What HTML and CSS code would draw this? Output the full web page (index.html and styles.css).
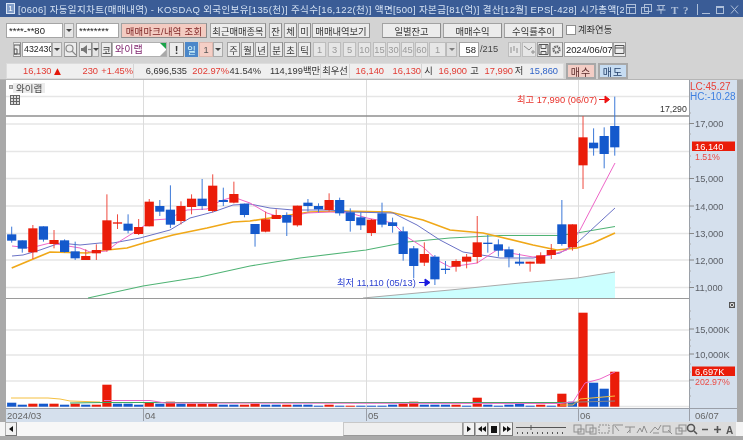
FILE: index.html
```html
<!DOCTYPE html>
<html lang="ko">
<head>
<meta charset="utf-8">
<title>자동일지차트</title>
<link rel="stylesheet" href="styles.css">
</head>
<body>
<div class="window">
  <header class="titlebar">
    <span class="title-num">1</span>
    <span class="title-text">[0606] 자동일지차트(매매내역) - KOSDAQ 외국인보유[135(천)] 주식수[16,122(천)] 액면[500] 자본금[81(억)] 결산[12월] EPS[-428] 시가총액[2,615(억)]</span>
    <svg class="title-tools" viewBox="0 0 117 14" width="117" height="14">
      <g class="tool-line">
        <rect x="2.5" y="2.5" width="9" height="9"/><path d="M2.5 5.5h9M5.5 5.5v6"/>
        <rect x="20.5" y="2.5" width="7" height="7"/><rect x="17.5" y="5.5" width="7" height="6"/>
        <path d="M33 3.5h8M35 3.5v4h4v-4M32.5 8h9M37 8v4"/>
        <path d="M73.500 2v11"/>
        <path d="M78 11.500h8"/>
        <rect x="92.500" y="4.500" width="7" height="7"/><path d="M92.500 5.500h7"/>
        <path d="M107 3.500l7 8M114 3.500l-7 8"/>
      </g>
      <text x="47" y="12" class="tool-t">T</text>
      <text x="59" y="12" class="tool-t">?</text>
    </svg>
  </header>

  <section class="toolbar">
    <div class="row row-one">
      <span class="field w57">****-**80</span>
      <span class="drop w10 ml1"><i class="tri"></i></span>
      <span class="field w43 ml2">********</span>
      <button class="btn pink w86 ml2 wide">매매마크/내역 조회</button>
      <button class="btn w56 ml3">최근매매종목</button>
      <button class="btn w13 ml3">잔</button>
      <button class="btn w13 ml2">체</button>
      <button class="btn w13 ml1">미</button>
      <button class="btn w58 ml1">매매내역보기</button>
      <button class="btn w59 ml12">일별잔고</button>
      <button class="btn w59 ml2">매매수익</button>
      <button class="btn w59 ml2">수익률추이</button>
      <span class="check ml3"></span>
      <span class="check-label ml2">계좌연동</span>
    </div>
    <div class="row row-two">
      <span class="btn w8 ml7 icon-cell"><svg viewBox="0 0 8 13" width="8" height="13"><path class="ink" d="M1 2h6v9H1zM1 6h3v5H1z"/></svg></span>
      <span class="field w30 ml1 code">432430</span>
      <span class="drop w10"><i class="tri"></i></span>
      <span class="btn w13 ml2 icon-cell"><svg viewBox="0 0 13 13" width="13" height="13"><circle class="ink-l" cx="5.500" cy="5.500" r="3.500"/><path class="ink-l" d="M8 8l4 4"/></svg></span>
      <span class="btn w13 ml2 icon-cell"><svg viewBox="0 0 13 13" width="13" height="13"><path class="fill-d" d="M2 5h2l4-3v9L4 8H2z"/><path class="ink-l" d="M9 6.500h3"/></svg></span>
      <span class="drop w7"><i class="tri"></i></span>
      <span class="btn w11 ml2">코</span>
      <span class="name w55">와이랩<i class="flag-g"></i><i class="flag-y"></i></span>
      <button class="btn w15 ml2 bang">!</button>
      <button class="btn w13 ml1 day">일</button>
      <button class="btn w14 ml1 onep">1</button>
      <span class="drop w10"><i class="tri"></i></span>
      <button class="btn w13 ml4">주</button>
      <button class="btn w13 ml1">월</button>
      <button class="btn w13 ml1">년</button>
      <button class="btn w13 ml2">분</button>
      <button class="btn w13 ml1">초</button>
      <button class="btn w13 ml1">틱</button>
      <button class="btn w13 ml2 off">1</button>
      <button class="btn w13 ml2 off">3</button>
      <button class="btn w13 ml2 off">5</button>
      <button class="btn w13 ml2 off">10</button>
      <button class="btn w13 ml2 off">15</button>
      <button class="btn w13 ml1 off">30</button>
      <button class="btn w13 ml1 off">45</button>
      <button class="btn w13 ml1 off">60</button>
      <span class="btn w17 ml1 off">1</span>
      <span class="drop w11 dim"><i class="tri"></i></span>
      <span class="field w20 ml2 right">58</span>
      <span class="count w20 ml1">/215</span>
      <span class="btn w13 ml8 off icon-cell"><svg viewBox="0 0 13 13" width="13" height="13"><path class="ink-f" d="M3 4v6M6 3v5M9 5v5"/></svg></span>
      <span class="btn w14 ml1 off icon-cell"><svg viewBox="0 0 14 13" width="14" height="13"><path class="ink-m" d="M2 3l5 4 3-3M9 9h4M11 7v4"/></svg></span>
      <span class="btn w13 ml1 icon-cell"><svg viewBox="0 0 13 13" width="13" height="13"><path class="ink" d="M2 1.500h9v10H2zM4 1.500v4h5v-4M4 11.500v-3h5v3"/></svg></span>
      <span class="btn w13 icon-cell"><svg viewBox="0 0 13 13" width="13" height="13"><circle class="gear" cx="6.500" cy="6.500" r="3"/></svg></span>
      <span class="field w49 ml1 tight">2024/06/07</span>
      <span class="btn w13 icon-cell"><svg viewBox="0 0 13 13" width="13" height="13"><path class="ink" d="M2 2.500h9v8H2zM2 5h9"/></svg></span>
    </div>
    <div class="row row-three">
      <div class="strip">
        <span class="cell w54 up">16,130 <span class="tri-up">▲</span></span>
        <span class="cell w37 up">230</span>
        <span class="cell w36 up sep">+1.45%</span>
        <span class="cell w53">6,696,535</span>
        <span class="cell w42 up">202.97%</span>
        <span class="cell w32">41.54%</span>
        <span class="cell w60 sep">114,199백만</span>
        <span class="cell w29 ctr sep">최우선</span>
        <span class="cell w34 up">16,140</span>
        <span class="cell w38 up sep">16,130</span>
        <span class="cell w13 ctr">시</span>
        <span class="cell w32 up">16,900</span>
        <span class="cell w15 ctr">고</span>
        <span class="cell w31 up">17,990</span>
        <span class="cell w12 ctr">저</span>
        <span class="cell w33 down">15,860</span>
      </div>
      <button class="btn order buy ml2">매수</button>
      <button class="btn order sell ml2">매도</button>
    </div>
  </section>

  <main class="chart-wrap">
    <svg class="chart" viewBox="6 80 731 342" width="731" height="342">
      <rect class="plot" x="6" y="80" width="683" height="328"/>
      <g class="grid">
        <path d="M6 96.500H689M6 124H689M6 151.500H689M6 178.500H689M6 206H689M6 233.500H689M6 260H689M6 287.500H689"/>
        <path d="M6 330H689M6 355H689M6 381H689M6 406.500H689"/>
      </g>
      <path class="vgrid" d="M143.500 80V408M366.500 80V408M578.500 80V408"/>
      <path class="level" d="M6 116H689"/>
      <path class="split" d="M6 298.500H689"/>

      <polygon class="cloud" points="363,298 450,290 520,283 577,278 615,272 615,298"/>
      <polyline class="cloud-top" points="363,298 450,290 520,283 577,278 615,272"/>
      <polyline class="ma120" points="88,298 143,286 200,277 250,266 300,258 366,250 407,242 450,238 500,235.500 560,235.500 577,233 615,226.500"/>
      <polyline class="ma60" points="11.700,268 50,252 87,253 107,250 127,248 147,242 173,235 207,228 233,222 250,221 270,218 310,212 343,211 390,212 423,220 450,230 483,233 500,237 533,245 557,250 577,248 593,243 615,233"/>
      <polyline class="ma20" points="12,256 23,255 40,250 60,243 80,245 100,243 113,243 140,238 170,230 190,218 213,212 233,205 250,204 270,208 293,210 330,210 350,212 393,213 417,225 440,240 463,252 500,258 533,258 560,253 577,243 615,208"/>
      <polyline class="ma5" points="12,246 30,248 50,243 80,248 90,252 107,251 117,243 133,233 153,220 167,219 187,210 207,209 220,201 233,197 250,203 267,213 283,218 307,213 330,212 350,213 367,218 393,223 407,237 423,247 437,260 450,267 477,263 500,248 510,253 533,257 550,255 567,250 580,230 615,163"/>

      <g id="candles"></g>
      <g id="volumes"></g>

      <polyline class="v-orange" points="11,398 48,398 60,399 70,401 100,402"/>
      <polyline class="v-green" points="70,403 104,402.500 560,402.500 573,403"/>
      <polyline class="v-pink" points="104,400.500 150,400.500 165,403 560,403.500 573,402 585,383 600,379 615,372"/>
      <polyline class="v-orange" points="560,405 573,405 580,399 615,396"/>
      <polyline class="v-gray" points="573,403 580,402 615,401"/>

      <rect class="label-bg" x="13" y="83" width="32" height="10"/>
      <rect class="label-dot" x="9.500" y="85.500" width="3" height="3"/>
      <text class="t-name" x="16" y="91.500">와이랩</text>
      <g class="grid-icon">
        <rect x="10.500" y="95.500" width="9" height="9"/>
        <path d="M10.500 98.500h9M10.500 101.500h9M13.500 95.500v9M16.500 95.500v9"/>
      </g>

      <text class="t-hi" x="517" y="103">최고 17,990 (06/07)</text>
      <path class="arrow-r" d="M599 99.500h9M605 96l4.500 3.500-4.500 3.500z"/>
      <text class="t-lo" x="337" y="286">최저 11,110 (05/13)</text>
      <path class="arrow-b" d="M419 282.500h7M425 279l5 3.500-5 3.500z"/>
      <text class="t-level" x="660" y="112">17,290</text>

      <rect class="axis" x="689" y="80" width="48" height="328"/>
      <path class="axis-edge" d="M689.500 80V421"/>
      <path class="ticks" d="M689 123.500h5M689 178.500h5M689 206h5M689 233.500h5M689 260h5M689 287.500h5M689 329h5M689 354h5M689 380h5"/>
      <path class="minor" d="M689 113h2M689 134h2M689 156h2M689 167h2M689 189h2M689 200h2M689 217h2M689 228h2M689 244h2M689 255h2M689 271h2M689 282h2M689 311h2M689 319h2M689 340h2M689 346h2M689 364h2M689 372h2M689 388h2M689 396h2"/>
      <text class="t-lc" x="690" y="90">LC:45.27</text>
      <text class="t-hc" x="690" y="100">HC:-10.28</text>
      <text class="t-ax" x="695" y="127">17,000</text>
      <text class="t-ax" x="695" y="182">15,000</text>
      <text class="t-ax" x="695" y="209.500">14,000</text>
      <text class="t-ax" x="695" y="236.500">13,000</text>
      <text class="t-ax" x="695" y="263.500">12,000</text>
      <text class="t-ax" x="695" y="290.500">11,000</text>
      <rect class="tag" x="692" y="141.500" width="43" height="9.500"/>
      <text class="t-tag" x="695" y="150">16,140</text>
      <text class="t-pct" x="695" y="159.500">1.51%</text>
      <g class="close-mini"><rect x="729.500" y="302.500" width="5" height="5"/><path d="M730.500 303.500l3 3M733.500 303.500l-3 3"/></g>
      <text class="t-ax" x="695" y="333">15,000K</text>
      <text class="t-ax" x="695" y="358">10,000K</text>
      <rect class="tag" x="692" y="366.500" width="43" height="9.500"/>
      <text class="t-tag" x="695" y="375">6,697K</text>
      <text class="t-pct" x="695" y="384.500">202.97%</text>

      <rect class="date-band" x="6" y="408" width="731" height="14"/>
      <path class="date-line" d="M6 408.500H737M143.500 408V421M366.500 408V421M578.500 408V421M689.500 408V421"/>
      <text class="t-date" x="7" y="418.500">2024/03</text>
      <text class="t-date" x="145" y="418.500">04</text>
      <text class="t-date" x="368" y="418.500">05</text>
      <text class="t-date" x="580" y="418.500">06</text>
      <text class="t-date" x="695" y="418.500">06/07</text>
    </svg>
  </main>

  <footer class="bottom">
    <span class="bbtn w12"><i class="ar-l"></i></span>
    <span class="track"></span>
    <span class="thumb"></span>
    <span class="bbtn w12"><i class="ar-r"></i></span>
    <span class="bbtn w13"><i class="ar-l"></i><i class="ar-l"></i></span>
    <span class="bbtn w12"><i class="stop"></i></span>
    <span class="bbtn w13"><i class="ar-r"></i><i class="ar-r"></i></span>
    <svg class="bottom-tools" viewBox="514 422 223 14" width="223" height="14">
      <path class="ink" d="M517 427.500h50M532 425v5"/>
      <path class="dots" d="M518 433h49"/>
      <g class="ink-m">
        <rect x="575" y="425" width="7" height="7"/><rect x="579" y="429" width="6" height="5"/>
        <rect x="587" y="425" width="7" height="7"/><rect x="591" y="428" width="6" height="6"/>
        <rect x="600" y="425" width="10" height="8" stroke-dasharray="2 1"/>
        <path d="M614 425v9M614 425h10M616 426l4 5"/>
        <path d="M626 427h10M631 427v6M628 433l3-3"/>
        <path d="M638 433l3-5 2 4 2-6 3 7"/>
        <path d="M651 433l5-6 3 3 3-5M654 433h6"/>
        <rect x="664" y="426" width="7" height="6"/><path d="M669 430l4 4"/>
        <rect x="677" y="428" width="6" height="6"/><rect x="680" y="425" width="7" height="6"/>
      </g>
      <circle class="ink-d" cx="692" cy="428" r="3.500"/>
      <path class="ink-d" d="M695 431l3 3M703 429.500h6M715 429.500h7M718.500 426v7"/>
      <text class="tool-a" x="727" y="434">A</text>
    </svg>
  </footer>
</div>
<script src="chart.js"></script>
</body>
</html>
```

FILE: styles.css
```css
* { box-sizing: border-box; }
html, body { margin: 0; padding: 0; }
body {
  width: 743px; height: 440px; overflow: hidden;
  background: #a9a9a9;
  font: 9.3px "Liberation Sans", "Noto Sans CJK KR", sans-serif;
  color: #333;
}
.window { display: flex; flex-direction: column; width: 743px; height: 440px; filter: blur(.3px); }

/* title bar */
.titlebar {
  display: flex; align-items: center; height: 17px; flex: none;
  background: #3a5c96; color: #d5e2f3; padding-left: 6px;
}
.title-num {
  width: 9px; height: 11px; flex: none; border: 1px solid #dbe6f5; background: #7f9cc8;
  color: #fff; font-size: 8px; line-height: 9px; text-align: center;
}
.title-text {
  width: 606px; margin-left: 3px; flex: none; overflow: hidden; white-space: nowrap;
  font-size: 9.5px; letter-spacing: .37px;
}
.title-tools { flex: none; margin-left: 0; }
.tool-line * { fill: none; stroke: #aebfd9; stroke-width: 1; }
.tool-t { font: bold 11px "Liberation Serif", serif; fill: #aebfd9; }

/* toolbar */
.toolbar { flex: none; height: 63px; background: #d3d3d3; border-bottom: 1px solid #b5b5b5; padding-top: 6px; }
.row { display: flex; align-items: stretch; height: 15px; padding-left: 6px; white-space: nowrap; }
.row-two { margin-top: 4px; }
.row-three { margin-top: 6px; height: 16px; }

.field {
  display: block; background: #fff; border: 1px solid #a5a5a5; padding: 0 2px;
  line-height: 13px; color: #222; font-size: 9.5px; overflow: hidden;
}
.tight { padding: 0 1px; letter-spacing: -0.1px; }
.code { padding: 0 0 0 1px; font-size: 8.8px; }
.right { text-align: right; }
.wide { letter-spacing: .3px; }
.drop {
  display: flex; align-items: center; justify-content: center;
  background: #e6e6e6; border: 1px solid #ababab;
}
.dim { opacity: .6; }
.tri { width: 0; height: 0; border: 3px solid transparent; border-top: 3px solid #444; border-bottom: 0; }
.btn {
  display: flex; align-items: center; justify-content: center; margin-top: 0;
  padding: 0; font: inherit; background: #ececec; color: #333;
  border: 1px solid #a2a2a2; border-bottom-color: #8c8c8c; border-right-color: #8c8c8c;
  overflow: hidden;
}
.pink { background: #f3cbc1; color: #7a1f1f; }
.off { color: #999; background: #e6e6e6; border-color: #bdbdbd; }
.bang { font-weight: bold; font-size: 11px; }
.day { background: #4b87c9; color: #dff; border-color: #4b87c9; }
.onep { background: #f5cfc6; color: #555; border-color: #dcb7ae; }
.icon-cell { padding: 0; }
.icon-cell svg { display: block; flex: none; }
.check { width: 10px; background: #fff; border: 1px solid #8f8f8f; margin-top: 2px; height: 10px; }
.check-label { line-height: 15px; color: #333; }
.name {
  position: relative; display: block; background: #fff; border: 1px solid #b0b0b0;
  color: #7c1f6a; padding-left: 2px; line-height: 13px; font-size: 10px;
}
.flag-g { position: absolute; right: 0; top: 0; border: 3px solid #1aa34a; border-left-color: transparent; border-bottom-color: transparent; }
.flag-y { position: absolute; right: 0; bottom: 0; border: 3px solid #a9a9a9; border-left-color: transparent; border-top-color: transparent; }
.count { line-height: 15px; color: #444; }
.ink { fill: none; stroke: #555; stroke-width: 1; }
.ink-l { fill: none; stroke: #8a8a8a; stroke-width: 1.2; }
.ink-f { fill: none; stroke: #bbb; stroke-width: 2; }
.ink-m { fill: none; stroke: #8f8f8f; stroke-width: 1; }
.ink-d { fill: none; stroke: #555; stroke-width: 1.6; }
.fill-d { fill: #777; }
.gear { fill: none; stroke: #666; stroke-width: 2.4; stroke-dasharray: 1.5 .8; }

.w7 { width: 7px; } .w8 { width: 8px; } .w10 { width: 10px; } .w11 { width: 11px; }
.w12 { width: 12px; } .w13 { width: 13px; } .w14 { width: 14px; } .w15 { width: 15px; }
.w17 { width: 17px; } .w20 { width: 20px; } .w29 { width: 29px; } .w30 { width: 30px; }
.w31 { width: 31px; } .w32 { width: 32px; } .w33 { width: 33px; } .w34 { width: 34px; }
.w36 { width: 36px; } .w37 { width: 37px; } .w38 { width: 38px; } .w42 { width: 42px; }
.w43 { width: 43px; } .w49 { width: 49px; } .w53 { width: 53px; } .w54 { width: 54px; }
.w55 { width: 55px; } .w56 { width: 56px; } .w57 { width: 57px; } .w58 { width: 58px; }
.w59 { width: 59px; } .w60 { width: 60px; } .w86 { width: 86px; }
.ml1 { margin-left: 1px; } .ml2 { margin-left: 2px; } .ml3 { margin-left: 3px; }
.ml4 { margin-left: 4px; } .ml7 { margin-left: 7px; } .ml8 { margin-left: 8px; } .ml12 { margin-left: 12px; }

/* quote strip */
.strip { display: flex; width: 558px; background: #efefef; border: 1px solid #dcdcdc; }
.cell { display: block; text-align: right; line-height: 14px; color: #333; }
.up { color: #e23b33; }
.down { color: #2f63c8; }
.ctr { text-align: center; }
.sep { border-right: 1px solid #d5d5d5; }
.tri-up { font-size: 9px; color: #e3170a; font-family: "DejaVu Sans", sans-serif; }
.order { width: 30px; letter-spacing: 1px; font-size: 10px; border-width: 2px; border-color: #a8a8a8; }
.buy { background: #f3cdc5; color: #5a2a2a; }
.sell { background: #c6dcf2; color: #24406a; }

/* chart */
.chart-wrap { flex: none; padding: 0 6px; height: 342px; }
.chart { display: block; font-family: "Liberation Sans", "Noto Sans CJK KR", sans-serif; font-size: 9.3px; }
.plot { fill: #fff; }
.grid { fill: none; stroke: #e6e6e6; stroke-width: 1.3; }
.vgrid { fill: none; stroke: #dcdcdc; stroke-width: 1; }
.level { stroke: #8f8f8f; stroke-width: 1.4; }
.split { stroke: #9a9a9a; stroke-width: 1; }
.cloud { fill: #ccffff; }
.cloud-top { fill: none; stroke: #aaa; stroke-width: 1; }
.ma120 { fill: none; stroke: #4fb374; stroke-width: 1.1; }
.ma60 { fill: none; stroke: #f0a818; stroke-width: 1.7; }
.ma20 { fill: none; stroke: #6a72c6; stroke-width: 1; }
.ma5 { fill: none; stroke: #ee66c8; stroke-width: 1; }
.up-body { fill: #ea1c09; }
.down-body { fill: #1459cc; }
.up-wick { stroke: #ef4a3e; stroke-width: 1; }
.down-wick { stroke: #3b78d8; stroke-width: 1; }
.v-orange { fill: none; stroke: #f5c040; stroke-width: 1; }
.v-green { fill: none; stroke: #3da860; stroke-width: 1; }
.v-pink { fill: none; stroke: #ee66c8; stroke-width: 1; }
.v-gray { fill: none; stroke: #888; stroke-width: 1; }
.label-bg { fill: #ececec; }
.label-dot { fill: #ccc; stroke: #999; stroke-width: 1; }
.t-name { fill: #444; font-size: 9.5px; }
.grid-icon * { fill: #ddd; stroke: #666; stroke-width: 1; }
.grid-icon path { fill: none; }
.t-hi { fill: #e8312a; }
.t-lo { fill: #2a3fd0; }
.t-level { fill: #333; font-size: 8.8px; }
.arrow-r { fill: #ee1111; stroke: #ee1111; stroke-width: 1; }
.arrow-b { fill: #1a1ae0; stroke: #1a1ae0; stroke-width: 1; }
.axis { fill: #d5e0ed; }
.axis-edge { stroke: #9aa0a8; stroke-width: 1; }
.ticks { stroke: #888; stroke-width: 1; }
.minor { stroke: #aaa; stroke-width: 1; }
.t-lc { fill: #e8413a; font-size: 10px; }
.t-hc { fill: #3d7fe0; font-size: 10px; }
.t-ax { fill: #5b5f66; }
.tag { fill: #ea1c09; }
.t-tag { fill: #fff; }
.t-pct { fill: #ec4a44; font-size: 8.8px; }
.close-mini * { fill: #ddd; stroke: #555; stroke-width: 1; }
.date-band { fill: #d5e0ed; }
.date-line { fill: none; stroke: #9a9fa8; stroke-width: 1; }
.t-date { fill: #666; font-size: 9.5px; }

/* bottom */
.bottom { flex: none; display: flex; height: 14px; padding-left: 5px; background: #f4f4f4; }
.bbtn {
  display: flex; align-items: center; justify-content: center; flex: none;
  background: #f2f2f2; border: 1px solid #b0b0b0; border-right-color: #777; border-bottom-color: #777;
}
.track { width: 326px; flex: none; background: #f7f7f7; }
.thumb { width: 120px; flex: none; background: #efefef; border: 1px solid #c8c8c8; border-bottom-color: #999; border-right-color: #999; }
.ar-l { width: 0; height: 0; border: 3px solid transparent; border-right: 4px solid #111; border-left: 0; }
.ar-r { width: 0; height: 0; border: 3px solid transparent; border-left: 4px solid #111; border-right: 0; }
.stop { width: 6px; height: 7px; background: #111; }
.bottom-tools { flex: none; background: #dcdcdc; }
.dots { stroke: #555; stroke-width: 2; stroke-dasharray: 1 4; }
.tool-a { font: bold 10px "Liberation Sans", sans-serif; fill: #555; }
```

FILE: chart.js
```js
// [colour, bodyTop, bodyBottom, wickTop, wickBottom] – values are chart rows in 1/3 px
var A = [
  ['d',163,182,140,188],['d',181,206,181,218],['u',145,217,135,237],['d',139,179,139,185],
  ['u',180,192,150,205],['d',181,216,178,218],['d',214,235,185,240],['u',228,240,208,240],
  ['u',210,220,193,240],['u',121,210,43,215],['u',127,131,103,147],['d',131,152,103,160],
  ['u',141,162,117,165],['u',65,139,57,139],['d',78,95,60,108],['d',89,134,16,144],
  ['u',78,123,64,133],['u',56,81,43,103],['d',56,78,-3,90],['u',17,93,-17,97],
  ['d',60,66,23,78],['u',42,68,5,70],['d',71,105,71,112],['d',132,162,132,200],
  ['u',118,155,95,157],['u',105,117,88,117],['d',105,128,97,168],['u',77,136,77,140],
  ['d',68,78,57,95],['d',78,88,70,97],['u',60,90,40,95],['d',60,100,53,107],
  ['d',97,123,85,155],['d',112,136,97,150],['u',119,159,117,168],['d',100,134,68,142],
  ['d',127,138,113,158],['d',154,222,140,242],['d',205,258,198,295],['u',222,248,187,258],
  ['d',230,298,225,315],['d',266,270,243,282],['u',243,260,238,275],['u',230,245,222,265],
  ['u',187,231,108,250],['d',188,192,165,218],['d',193,212,178,230]
];
var B = [
  ['d',478,502,470,532],['d',515,521,490,527],['u',515,521,515,545],['u',496,521,487,521],
  ['u',480,495,462,507],['d',403,462,330,467],['u',403,472,403,482],['u',142,226,78,297],
  ['d',158,175,115,197],['d',138,192,112,235],['d',108,172,20,197]
];
var X0 = 11.7, STEP = 10.58, out = '';
function candle(c, i, base) {
  var x = X0 + STEP * i;
  var t = base + c[1] / 3, b = base + c[2] / 3, h = base + c[3] / 3, l = base + c[4] / 3;
  var k = c[0] === 'u' ? 'up' : 'down';
  return '<line class="' + k + '-wick" x1="' + x + '" x2="' + x + '" y1="' + h + '" y2="' + l + '"/>' +
    '<rect class="' + k + '-body" x="' + (x - 4.6) + '" y="' + t + '" width="9.2" height="' + (b - t) + '"/>';
}
A.forEach(function (c, i) { out += candle(c, i, 180); });
B.forEach(function (c, i) { out += candle(c, i + A.length, 90); });
document.getElementById('candles').innerHTML = out;

// [colour, height] per session
var V = 'd4 d2 u3 d3 u3 d2 u3 d2 u2 u22 d3 d3 d2 u4 d3 u5 d3 u3 u3 u3 d2 d2 u2 u3 d2 d2 u2 d2 d2 d1 u2 d1 u1 d1 d1 d1 d2 u3 u5 d2 d2 d2 u2 d1 u9 d2 d1 d2 d3 d1 u2 d1 u13 d5 u94 d24 d18 u35'.split(' ');
var vout = '';
V.forEach(function (s, i) {
  var h = parseInt(s.slice(1), 10), x = X0 + STEP * i;
  vout += '<rect class="' + (s[0] === 'u' ? 'up' : 'down') + '-body" x="' + (x - 4.6) + '" y="' + (406.7 - h) + '" width="9.2" height="' + h + '"/>';
});
document.getElementById('volumes').innerHTML = vout;
```
